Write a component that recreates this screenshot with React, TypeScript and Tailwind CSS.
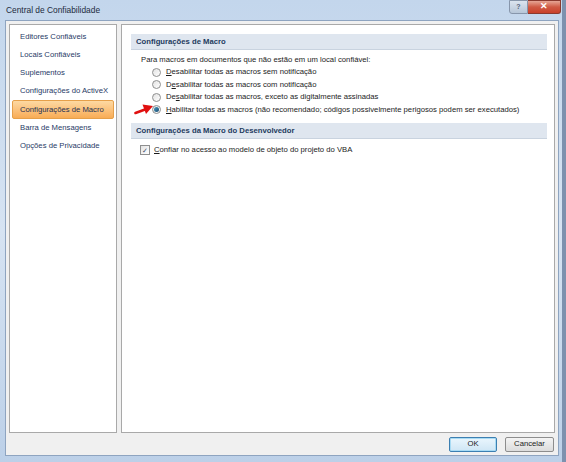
import React from "react";

const navItems = [
  "Editores Confiáveis",
  "Locais Confiáveis",
  "Suplementos",
  "Configurações do ActiveX",
  "Configurações de Macro",
  "Barra de Mensagens",
  "Opções de Privacidade",
];

function Radio({ checked }: { checked?: boolean }) {
  return (
    <span className="flex h-[9px] w-[9px] shrink-0 items-center justify-center rounded-full border border-[#8e8f8f] bg-gradient-to-br from-[#e2e2e2] to-[#ffffff]">
      {checked && <span className="h-[5px] w-[5px] rounded-full bg-gradient-to-br from-[#4f9fc3] to-[#18496f]" />}
    </span>
  );
}

function RadioRow({ checked, children }: { checked?: boolean; children: React.ReactNode }) {
  return (
    <div className="flex h-[12.5px] items-center gap-[5px] pl-[21px]">
      <Radio checked={checked} />
      <span>{children}</span>
    </div>
  );
}

function SectionHeader({ children }: { children: React.ReactNode }) {
  return (
    <div className="flex h-[16px] items-center border-b border-[#c9d3df] bg-[#dfe6ef] pl-[5px] font-bold text-[#233b5e]">
      {children}
    </div>
  );
}

export default function App() {
  return (
    <div
      className="flex h-[462px] w-[566px] flex-col overflow-hidden border-r-[4px] border-r-[#7d91ae] bg-gradient-to-b from-[#c3d6ec] via-[#d6e3f2] to-[#bcd0e8] pb-[6px] pl-[5px] text-[7.7px] text-[#1b1b1b]"
      style={{ fontFamily: '"Liberation Sans", Arial, sans-serif' }}
    >
      <div className="flex flex-1 flex-col pr-[3px]">
        {/* title bar */}
        <div className="relative flex h-[20px] shrink-0 items-center">
          <span className="pl-[1px] text-[8.4px] text-[#1d2b3c]">Central de Confiabilidade</span>
          <div className="absolute right-[-2px] top-0 flex">
            <div className="flex h-[14px] w-[19px] items-center justify-center rounded-bl-[3px] border border-[#8796ab] bg-gradient-to-b from-[#dbe4ef] to-[#b7c6d8] text-[7px] font-bold text-[#54647a]">
              ?
            </div>
            <div className="flex h-[14px] w-[33px] items-center justify-center rounded-br-[3px] border border-l-0 border-[#8a3a2f] bg-gradient-to-b from-[#e5a595] via-[#cf5a44] to-[#c9402a] text-[9px] font-bold text-white">
              ✕
            </div>
          </div>
        </div>

        {/* dialog body */}
        <div className="flex flex-1 flex-col border border-[#8ea4c0] bg-[#f0f0f0] px-[3px] pt-[3px]">
          <div className="flex h-[409px] gap-[4px]">
            {/* left nav */}
            <div className="w-[108px] border border-[#a9a9a9] bg-white px-[2px] pt-[3px] text-[#1f3a66]">
              {navItems.map((item) =>
                item === "Configurações de Macro" ? (
                  <div
                    key={item}
                    className="flex h-[19px] items-center rounded-[2px] border border-[#e6a04a] bg-gradient-to-b from-[#fdd9a2] to-[#f8ac55] pl-[7px] text-[#1b2f52]"
                  >
                    {item}
                  </div>
                ) : (
                  <div key={item} className="flex h-[18px] items-center pl-[8px]">
                    {item}
                  </div>
                )
              )}
            </div>

            {/* right content */}
            <div className="flex-1 border border-[#a9a9a9] bg-white pl-[9px] pr-[7px] pt-[9px]">
              <SectionHeader>Configurações de Macro</SectionHeader>
              <div className="pt-[4px]">
                <div className="flex h-[12px] items-center pl-[10px]">
                  Para macros em documentos que não estão em um local confiável:
                </div>
                <RadioRow>
                  <u>D</u>esabilitar todas as macros sem notificação
                </RadioRow>
                <RadioRow>
                  D<u>e</u>sabilitar todas as macros com notificação
                </RadioRow>
                <RadioRow>
                  De<u>s</u>abilitar todas as macros, exceto as digitalmente assinadas
                </RadioRow>
                <div className="relative">
                  <svg
                    className="absolute left-[3px] top-[-2px]"
                    width="20"
                    height="13"
                    viewBox="0 0 20 13"
                  >
                    <path d="M1.5 11 L11 7.5" stroke="#e01010" strokeWidth="2.6" strokeLinecap="round" />
                    <path d="M19 4 L8.5 2.5 L12 12 Z" fill="#e01010" />
                  </svg>
                  <RadioRow checked>
                    <u>H</u>abilitar todas as macros (não recomendado; códigos possivelmente perigosos podem ser executados)
                  </RadioRow>
                </div>
              </div>
              <div className="pt-[7px]">
                <SectionHeader>Configurações da Macro do Desenvolvedor</SectionHeader>
              </div>
              <div className="mt-[5px] flex h-[12px] items-center gap-[4px] pl-[9px]">
                <span className="flex h-[10px] w-[10px] items-center justify-center border border-[#8e8f8f] bg-gradient-to-br from-[#e3e3e3] to-white text-[7px] leading-none text-[#3d4f6a]">
                  ✓
                </span>
                <span>
                  <u>C</u>onfiar no acesso ao modelo de objeto do projeto do VBA
                </span>
              </div>
            </div>
          </div>

          {/* buttons */}
          <div className="flex flex-1 items-center justify-end gap-[8px] pr-[1px]">
            <button className="h-[15px] w-[48px] rounded-[2px] border border-[#3c7fb1] bg-gradient-to-b from-[#eaf6fd] to-[#cfe6f5] text-[7.7px] text-[#1b1b1b] shadow-[inset_0_0_0_1px_#a8dbf4]">
              OK
            </button>
            <button className="h-[15px] w-[49px] rounded-[2px] border border-[#8d8d8d] bg-gradient-to-b from-[#f4f4f4] to-[#dcdcdc] text-[7.7px] text-[#1b1b1b]">
              Cancelar
            </button>
          </div>
        </div>
      </div>
    </div>
  );
}
